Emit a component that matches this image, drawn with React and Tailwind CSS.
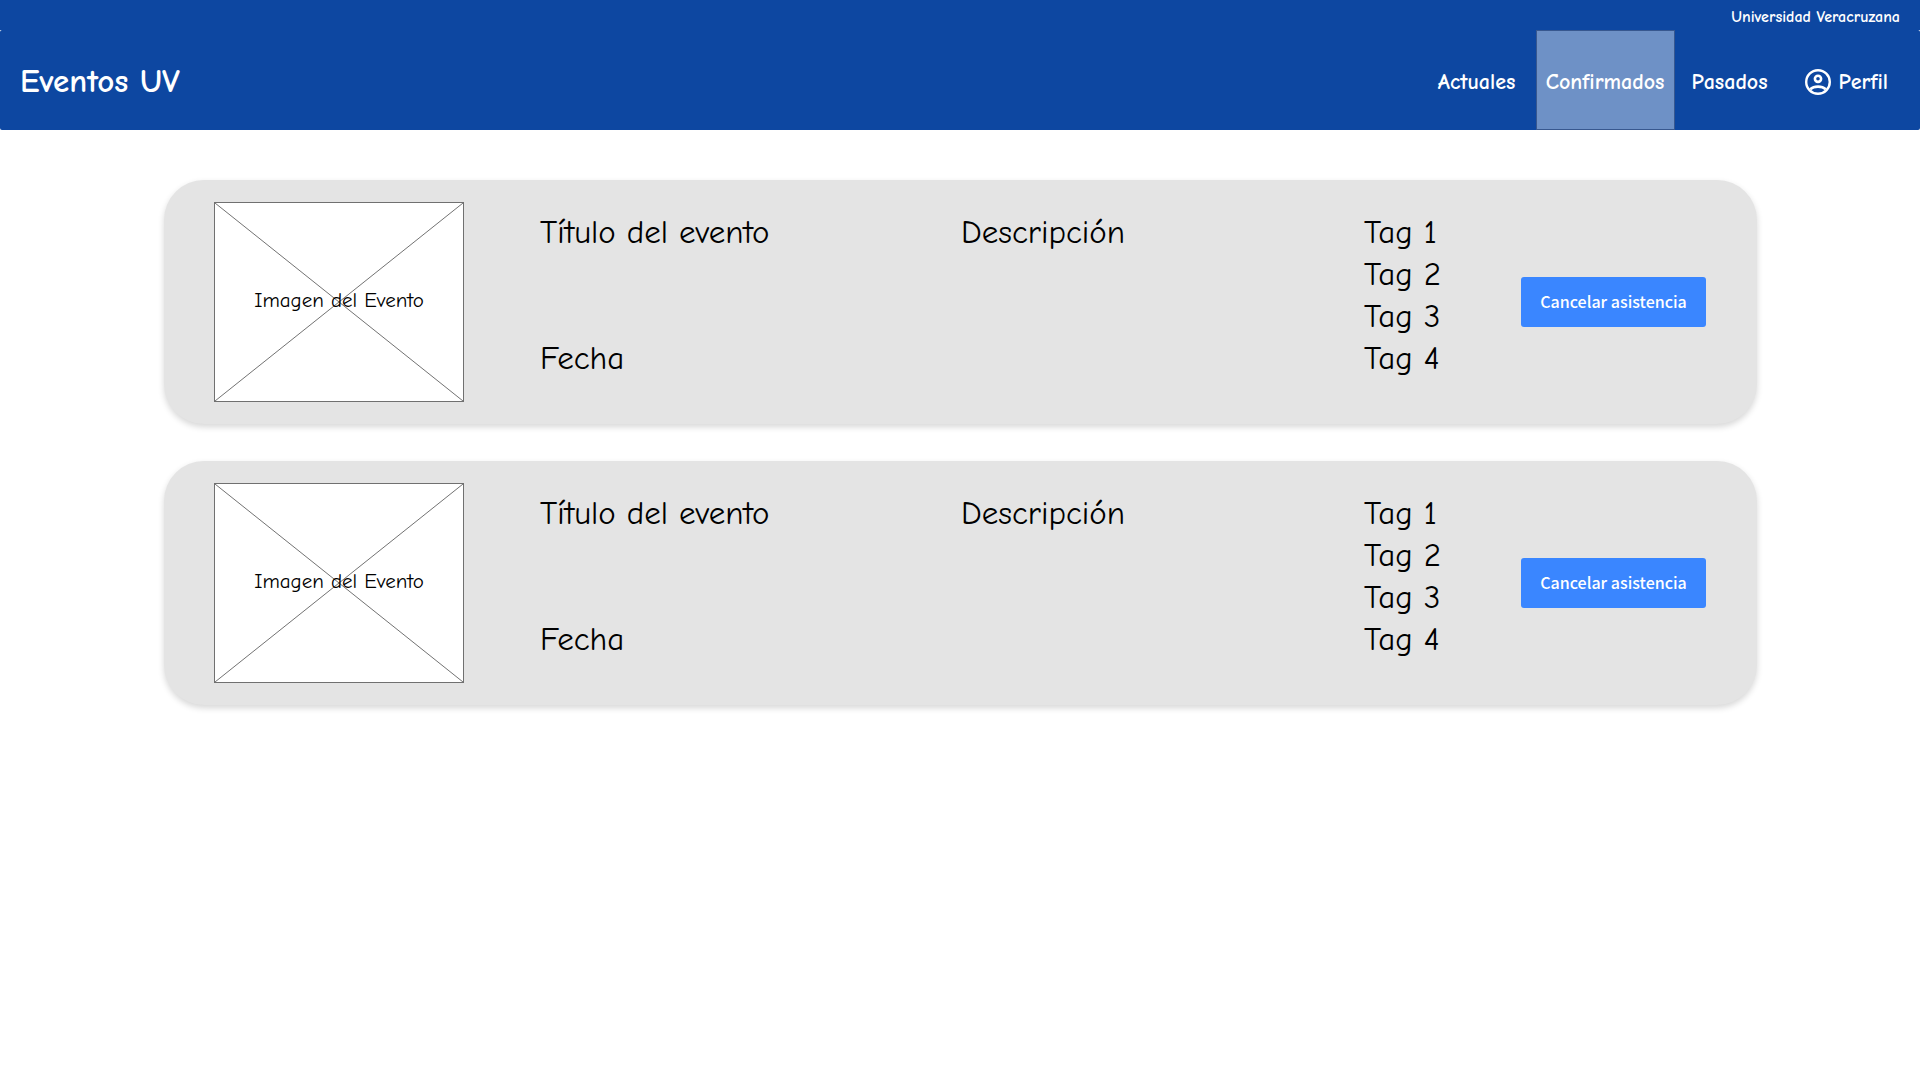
const EVENTS = [1, 2];
const TAGS = ["Tag 1", "Tag 2", "Tag 3", "Tag 4"];

function ProfileIcon() {
  return (
    <svg viewBox="0 0 26 26" className="size-[26px] shrink-0" fill="none" stroke="currentColor" aria-hidden="true">
      <circle cx="13" cy="13" r="11.8" strokeWidth="2.4" />
      <circle cx="13" cy="9.8" r="3.1" strokeWidth="2.6" />
      <path d="M5.2 20.2C7.2 18.4 10 17.6 13 17.6s5.8.8 7.8 2.6" strokeWidth="2.6" />
    </svg>
  );
}

function NavBar() {
  return (
    <header className="font-bold text-white">
      <div className="flex h-[30px] items-center justify-end bg-[#0d47a1] px-5 pt-1 text-[16px]">
        Universidad Veracruzana
      </div>
      <nav className="flex h-[100px] items-center justify-between rounded-xs bg-[#0d47a1] pr-8 pl-5">
        <h1 className="pt-1 text-[33px]">Eventos UV</h1>
        <div className="flex h-full items-center text-[22px]">
          <a href="#actuales" className="flex h-full w-[118px] items-center justify-center pt-1">Actuales</a>
          <a href="#confirmados" aria-current="page" className="flex h-full w-[139px] items-center justify-center border border-[#38588f] bg-[#6e91c6] pt-1">Confirmados</a>
          <a href="#pasados" className="flex h-full w-[110px] items-center justify-center pt-1">Pasados</a>
          <a href="#perfil" className="ml-5 flex h-full items-center gap-2 pt-1"><ProfileIcon />Perfil</a>
        </div>
      </nav>
    </header>
  );
}

function ImagePlaceholder() {
  return (
    <div className="relative flex h-[200px] w-[250px] items-center justify-center border border-[#707070] bg-white pb-1">
      <svg className="absolute inset-0 size-full" viewBox="0 0 250 200" preserveAspectRatio="none" stroke="#707070" aria-hidden="true">
        <path d="M0 0 250 200M250 0 0 200" />
      </svg>
      <span className="relative text-[21px]">Imagen del Evento</span>
    </div>
  );
}

function EventCard() {
  return (
    <article className="grid grid-cols-[326px_421fr_403fr_157px_185px] items-center rounded-[40px] bg-[#e4e4e4] py-[22px] pr-[51px] pl-[50px] text-[33px] leading-[42px] text-black shadow-[0_3px_6px_rgba(0,0,0,0.16)]">
      <ImagePlaceholder />
      <div className="flex h-[182px] flex-col justify-between pb-3.5">
        <h2>Título del evento</h2>
        <p>Fecha</p>
      </div>
      <p className="h-[182px]">Descripción</p>
      <ul className="h-[182px]">
        {TAGS.map((tag) => <li key={tag}>{tag}</li>)}
      </ul>
      <button type="button" className="h-[50px] rounded-[3px] bg-[#3a86ff] pb-0.5 font-['Source_Sans_Pro','Noto_Sans_CJK_SC',sans-serif] text-base font-medium text-white">
        Cancelar asistencia
      </button>
    </article>
  );
}

export default function App() {
  return (
    <div className="min-h-screen bg-white font-['Comic_Sans_MS','Comic_Neue','Open_Sans',sans-serif]">
      <NavBar />
      <main className="flex flex-col gap-[37px] pt-[50px] pr-[163px] pb-12 pl-[164px]">
        {EVENTS.map((id) => <EventCard key={id} />)}
      </main>
    </div>
  );
}
